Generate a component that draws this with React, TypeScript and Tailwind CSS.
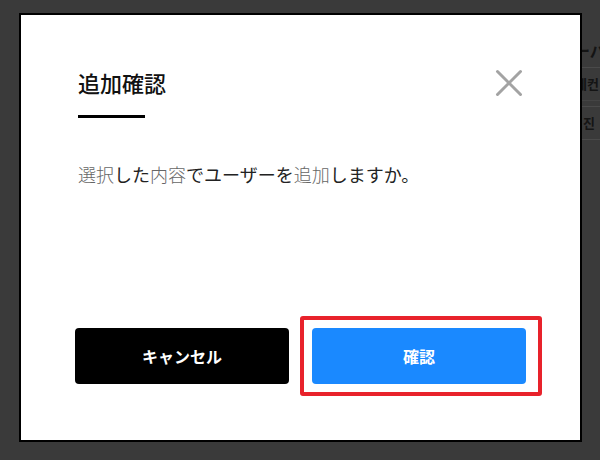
const jp = { fontFamily: '"Noto Sans CJK JP", "Noto Sans", sans-serif' }
const kr = { fontFamily: '"Noto Sans CJK KR", "Noto Sans", sans-serif' }

export default function App() {
  return (
    <div className="relative w-[600px] h-[460px] overflow-hidden bg-[#3a3a3a]">
      {/* page behind the overlay */}
      <div className="flex justify-end h-full">
        <div className="w-[24px] pt-[38px] text-[#141414] overflow-hidden">
          <div className="h-[29px] text-[16px] font-bold whitespace-nowrap leading-[24px] -ml-[2px]" style={jp}>
            ーバー
          </div>
          <div className="h-[33px] border-t border-[#4a4a4a] flex items-center text-[13px] font-bold whitespace-nowrap -ml-[1px]" style={kr}>
            세컨
          </div>
          <div className="h-[6px] border-t border-[#444]"></div>
          <div className="h-[33px] border-t border-[#4a4a4a] flex items-center text-[13px] font-bold whitespace-nowrap -ml-[5px]" style={kr}>
            혁진
          </div>
          <div className="border-t border-[#4a4a4a]"></div>
        </div>
      </div>

      {/* modal */}
      <div
        className="absolute left-[19px] top-[13px] w-[563px] h-[429px] border-2 border-black bg-white flex flex-col px-[54px] pb-[56px]"
        style={jp}
      >
        <div className="flex justify-between items-start pt-[51px] pl-[3px]">
          <div>
            <h2 className="text-[22px] leading-[32px] font-medium text-[#111]">追加確認</h2>
            <div className="mt-[17px] w-[67px] h-[3px] bg-black"></div>
          </div>
          <button className="mt-[3px] mr-[3px]">
            <svg width="28" height="28" viewBox="0 0 28 28" fill="none" stroke="#a3a3a3" strokeWidth="3" strokeLinecap="round">
              <path d="M2.5 2.5 L25.5 25.5" />
              <path d="M25.5 2.5 L2.5 25.5" />
            </svg>
          </button>
        </div>

        <p className="mt-[43px] pl-[3px] text-[18px] leading-[27px] text-[#222]">
          <span className="text-[#666] font-light">選択</span>した<span className="text-[#666] font-light">内容</span>
          でユーザーを<span className="text-[#666] font-light">追加</span>しますか。
        </p>

        <div className="mt-auto flex gap-[23px]">
          <button className="flex-1 h-[56px] rounded bg-black text-white text-[16px] font-bold">
            キャンセル
          </button>
          <div className="relative flex-1">
            <button className="w-full h-[56px] rounded bg-[#1a89ff] text-white text-[16px] font-bold">
              確認
            </button>
            <div className="absolute -left-3 -top-3 -bottom-3 -right-4 border-4 border-[#e8222b] rounded-[3px]"></div>
          </div>
        </div>
      </div>
    </div>
  )
}
